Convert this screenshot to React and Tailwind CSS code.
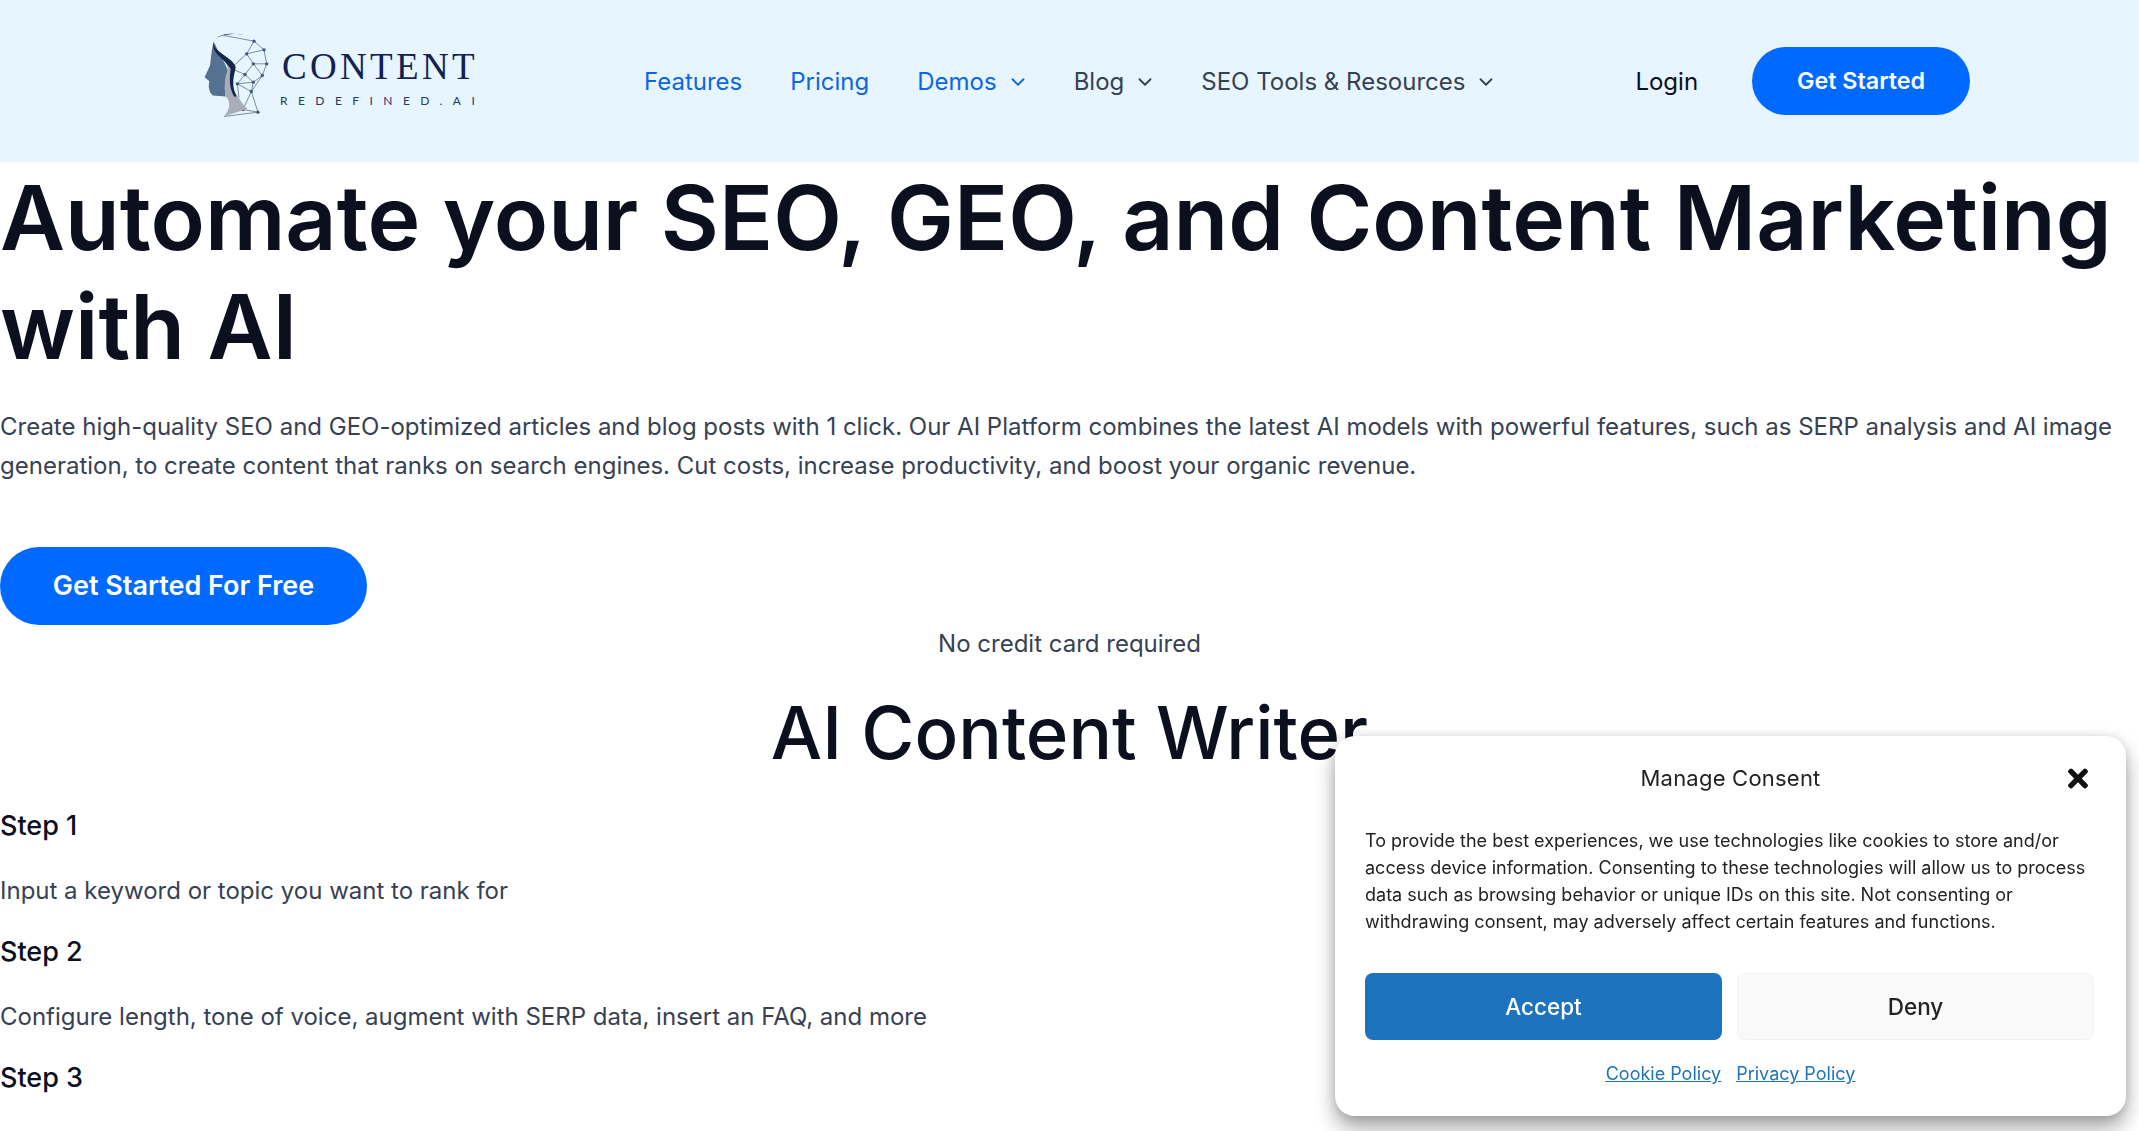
import React from 'react';
import { ChevronDown } from 'lucide-react';

const body = "[font-family:Inter,'Liberation_Sans',sans-serif]";

function LogoMark() {
  const lines = [
    [130, 75, 220, 92], [220, 92, 250, 118], [250, 118, 198, 130], [220, 92, 198, 130], [198, 130, 218, 160],
    [250, 118, 258, 160], [218, 160, 258, 160], [258, 160, 245, 195], [218, 160, 193, 192], [218, 160, 245, 195],
    [198, 130, 160, 165], [160, 178, 193, 192], [193, 192, 218, 215], [245, 195, 218, 215], [193, 192, 170, 220],
    [218, 215, 212, 243], [170, 220, 212, 243], [170, 220, 175, 262], [212, 243, 232, 305], [212, 243, 187, 297],
    [187, 297, 232, 305], [232, 305, 130, 318], [245, 195, 212, 243], [170, 220, 218, 215],
  ];
  const dots = [
    [220, 92], [250, 118], [198, 130], [258, 160], [218, 160], [245, 195], [193, 192],
    [218, 215], [170, 220], [212, 243], [232, 305], [187, 297],
  ];
  return (
    <svg width="65" height="87" viewBox="70 65 195 260" className="shrink-0">
      {lines.map((l, i) => (
        <line key={i} x1={l[0]} y1={l[1]} x2={l[2]} y2={l[3]} stroke="#64788f" strokeWidth="2.5" />
      ))}
      {dots.map((d, i) => (
        <circle key={i} cx={d[0]} cy={d[1]} r="5" fill="#3f587c" />
      ))}
      <path d="M100 95C92 115 92 140 88 165L72 200 86 212 84 228 88 245 96 255 135 258C130 230 135 200 142 180 130 150 115 130 105 105Z" fill="#54728f" />
      <path d="M135 150C150 155 162 168 155 190 145 225 165 250 190 285L200 295 130 318C150 295 150 270 135 258 128 225 135 190 142 178Z" fill="#a9aeb6" />
      <path d="M190 72C160 68 120 72 105 85 92 98 100 112 118 125 140 142 165 155 165 172 160 195 150 225 168 258L160 258C142 225 148 195 150 175 135 150 105 135 98 110 92 88 115 70 155 70Z" fill="#14244a" />
    </svg>
  );
}

function Logo() {
  return (
    <div className="flex items-center gap-[13px] ml-[204px] -mt-[12px] w-[276px] shrink-0">
      <LogoMark />
      <div className="flex flex-col mt-[4px]">
        <span className="text-[37px] leading-[42px] tracking-[0.09em] text-[#14224f] [font-family:'Liberation_Serif',serif] whitespace-nowrap">CONTENT</span>
        <span className="text-[12px] leading-[16px] mt-[5px] -ml-[2px] tracking-[0.87em] text-[#2a3a5e] [font-family:Lato,sans-serif] whitespace-nowrap">REDEFINED.AI</span>
      </div>
    </div>
  );
}

function NavItem({ label, color, chevron }) {
  return (
    <a className={`flex items-center gap-[10px] text-[24px] ${color}`}>
      {label}
      {chevron && <ChevronDown size={22} strokeWidth={2} className="-mr-[3px]" />}
    </a>
  );
}

function Header() {
  return (
    <header className="flex items-center h-[162px] bg-[#e6f5ff]">
      <Logo />
      <nav className="flex items-center gap-[48px] ml-[164px] mt-[1px]">
        <NavItem label="Features" color="text-[#0f66e0]" />
        <NavItem label="Pricing" color="text-[#0f66e0]" />
        <NavItem label="Demos" color="text-[#0f66e0]" chevron />
        <NavItem label="Blog" color="text-[#374151]" chevron />
        <NavItem label="SEO Tools & Resources" color="text-[#374151]" chevron />
      </nav>
      <a className="ml-[141px] mt-[1px] text-[24px] text-[#0b0f1e]">Login</a>
      <a className="ml-[54px] flex items-center justify-center w-[218px] h-[68px] rounded-full bg-[#0069ff] text-white text-[23.3px] font-semibold">Get Started</a>
    </header>
  );
}

function ConsentBox() {
  return (
    <div className={`fixed right-[13px] bottom-[15px] w-[791px] h-[380px] rounded-[20px] bg-white px-[30px] pt-[24px] shadow-[0_12px_20px_rgba(0,0,0,0.35),0_0_12px_rgba(0,0,0,0.12)] ${body}`}>
      <div className="relative text-center text-[22px] leading-[36px] text-[#222222] tracking-[0.01em]">
        Manage Consent
        <svg viewBox="0 0 352 512" className="absolute right-[6px] top-[4px] w-[24px] h-[29px]" fill="#111111">
          <path d="M242.7 256l100.1-100.1c12.3-12.3 12.3-32.2 0-44.5l-22.2-22.2c-12.3-12.3-32.2-12.3-44.5 0L176 189.3 75.900 89.200c-12.300-12.300-32.200-12.300-44.500 0L9.200 111.400c-12.300 12.300-12.300 32.200 0 44.500L109.300 256 9.200 356.100c-12.300 12.300-12.300 32.200 0 44.500l22.200 22.200c12.300 12.300 32.200 12.300 44.500 0L176 322.700l100.100 100.100c12.300 12.300 32.200 12.300 44.500 0l22.200-22.200c12.300-12.300 12.300-32.200 0-44.500L242.700 256z" />
        </svg>
      </div>
      <p className="mt-[31px] text-[18px] leading-[27px] text-[#222222]">
        To provide the best experiences, we use technologies like cookies to store and/or access device information. Consenting to these technologies will allow us to process data such as browsing behavior or unique IDs on this site. Not consenting or withdrawing consent, may adversely affect certain features and functions.
      </p>
      <div className="mt-[38px] grid grid-cols-2 gap-[15px] w-[729px]">
        <button className="h-[67px] rounded-[8px] bg-[#1e73be] text-white text-[22.5px] font-medium">Accept</button>
        <button className="h-[67px] rounded-[8px] bg-[#f9f9f9] border border-[#f2f2f2] text-[#222222] text-[22.5px] font-medium">Deny</button>
      </div>
      <div className="mt-[20px] flex justify-center gap-[15px] text-[18px] leading-[27px] text-[#1e73be] underline">
        <a>Cookie Policy</a>
        <a>Privacy Policy</a>
      </div>
    </div>
  );
}

export default function App() {
  return (
    <div className={`h-[1131px] overflow-hidden bg-white text-[#374151] ${body}`}>
      <Header />
      <main>
        <h1 className="mt-[1px] text-[89.4px] leading-[109px] font-semibold text-[#0b0f1e]">Automate your SEO, GEO, and Content Marketing with AI</h1>
        <p className="mt-[26px] text-[24px] leading-[39px]">
          Create high-quality SEO and GEO-optimized articles and blog posts with 1 click. Our AI Platform combines the latest AI models with powerful features, such as SERP analysis and AI image generation, to create content that ranks on search engines. Cut costs, increase productivity, and boost your organic revenue.
        </p>
        <a className="mt-[62px] flex items-center justify-center w-[367px] h-[78px] rounded-full bg-[#0069ff] text-white text-[27px] font-semibold">Get Started For Free</a>
        <p className="mt-[1px] text-center text-[24px] leading-[36px]">No credit card required</p>
        <h2 className="mt-[26px] text-center text-[72.5px] leading-[90px] font-medium text-[#0b0f1e]">AI Content Writer</h2>
        <h3 className="mt-[27px] text-[27px] leading-[42px] font-medium text-[#0b0f1e]">Step 1</h3>
        <p className="mt-[24px] text-[24px] leading-[39px]">Input a keyword or topic you want to rank for</p>
        <h3 className="mt-[21px] text-[27px] leading-[42px] font-medium text-[#0b0f1e]">Step 2</h3>
        <p className="mt-[24px] text-[24px] leading-[39px]">Configure length, tone of voice, augment with SERP data, insert an FAQ, and more</p>
        <h3 className="mt-[21px] text-[27px] leading-[42px] font-medium text-[#0b0f1e]">Step 3</h3>
      </main>
      <ConsentBox />
    </div>
  );
}
